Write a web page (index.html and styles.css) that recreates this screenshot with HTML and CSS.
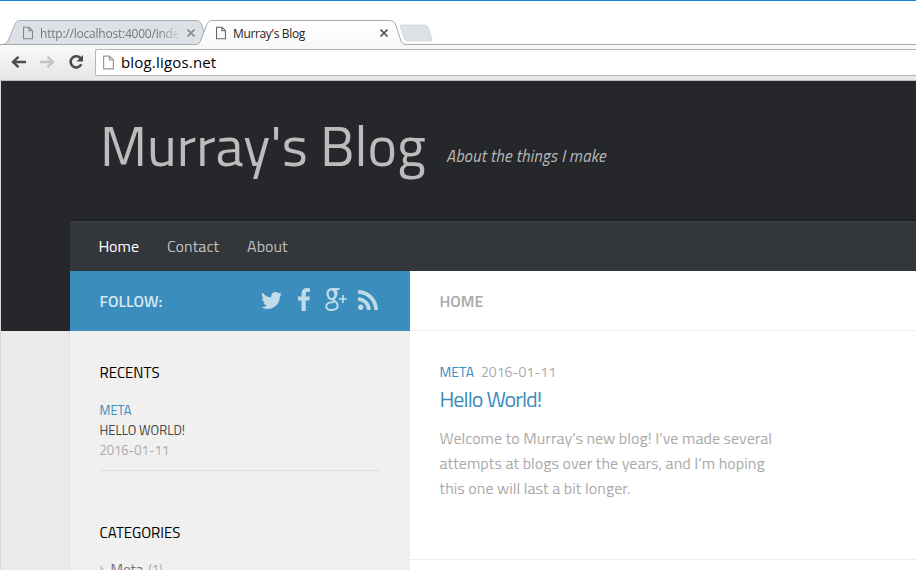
FILE: index.html
```html
<!DOCTYPE html>
<html lang="en">
<head>
<meta charset="utf-8">
<title>Murray's Blog</title>
<link rel="stylesheet" href="styles.css">
</head>
<body>
<div class="browser">
  <div class="tabstrip">
    <svg class="tab-shapes" width="916" height="34" viewBox="0 15 916 34">
      <defs>
        <linearGradient id="active" x1="0" y1="0" x2="0" y2="1"><stop offset="0" stop-color="#fff"/><stop offset="1" stop-color="#f7f7f7"/></linearGradient>
      </defs>
      <path d="M0 44.500H916V49H0z" fill="#f7f7f7"/>
      <path d="M0 44.500H3Q6.500 44.500 8 41L15 24Q16.500 20.500 20 20.500H196Q200 20.500 201.500 24L208 44.500z" fill="#dce1e8" stroke="#a9adb2"/>
      <path d="M400 26Q399.500 25 401.500 25H424Q427 25 428 27L432 39Q432.500 41 430 41H408Q405.500 41 404.500 39z" fill="#dce1e8" stroke="#cdd1d7" stroke-width=".7"/>
      <path d="M194 44.500H196Q199 44.500 200.500 41L207 24Q208.500 20.500 212 20.500H390Q394 20.500 395.500 24L401 41Q402.500 44.500 406 44.500H916V49H194z" fill="url(#active)"/>
      <path d="M0 44.500H196Q199 44.500 200.500 41L207 24Q208.500 20.500 212 20.500H390Q394 20.500 395.500 24L401 41Q402.500 44.500 406 44.500H916" fill="none" stroke="#a8a9aa"/>
    </svg>
    <div class="tab tab-back">
      <svg class="doc" viewBox="0 0 11 14"><path d="M.6.600H6.500L10.400 4.500V13.400H.6zM6.500.600V4.500H10.400"/></svg>
      <span class="tab-title url-title">http://localhost:4000/inde</span>
      <svg class="close" viewBox="0 0 8 8"><path d="M.5.500l7 7M7.500.500l-7 7"/></svg>
    </div>
    <div class="tab tab-front">
      <svg class="doc" viewBox="0 0 11 14"><path d="M.6.600H6.500L10.400 4.500V13.400H.6zM6.500.600V4.500H10.400"/></svg>
      <span class="tab-title">Murray's Blog</span>
      <svg class="close" viewBox="0 0 8 8"><path d="M.5.500l7 7M7.500.500l-7 7"/></svg>
    </div>
  </div>
  <div class="toolbar">
    <svg class="arrow" viewBox="0 0 15 12"><path d="M15 6H2M7.500.800L2 6l5.500 5.200"/></svg>
    <svg class="arrow arrow-off" viewBox="0 0 15 12"><path d="M0 6h13M7.500.800L13 6l-5.500 5.200"/></svg>
    <svg class="reload" viewBox="0 0 16 16"><path d="M12.800 4.600A5.600 5.600 0 1 0 13.300 10.300" fill="none" stroke="#4b4b4b" stroke-width="2.600"/><path d="M15 1v6.500H8.500z" fill="#4b4b4b"/></svg>
    <div class="address">
      <svg class="doc" viewBox="0 0 11 14"><path d="M.6.600H6.500L10.400 4.500V13.400H.6zM6.500.600V4.500H10.400"/></svg>
      <span class="address-text">blog.ligos.net</span>
    </div>
  </div>
</div>
<div class="page">
  <header class="masthead">
    <h1 class="site-title">Murray's Blog</h1>
    <p class="tagline">About the things I make</p>
  </header>
  <nav class="menu">
    <a class="item current">Home</a>
    <a class="item">Contact</a>
    <a class="item">About</a>
  </nav>
  <div class="columns">
    <aside class="sidebar">
      <div class="follow">
        <span class="follow-label">FOLLOW:</span>
        <div class="social">
          <svg class="twitter" viewBox="108 256 1576 1280"><path d="M1684 408q-67 98-162 167 1 14 1 42 0 130-38 259.500t-115.500 248.500-184.500 210.500-258 146-323 54.500q-271 0-496-145 35 4 78 4 225 0 401-138-105-2-188-64.500t-114-159.500q33 5 61 5 43 0 85-11-112-23-185.500-111.500t-73.500-205.500v-4q68 38 146 41-66-44-105-115t-39-154q0-88 44-163 121 149 294.500 238.500t371.500 99.500q-8-38-8-74 0-134 94.500-228.500t228.500-94.500q140 0 236 102 109-21 205-78-37 115-142 178 93-10 186-50z"/></svg>
          <svg class="facebook" viewBox="479 0 864 1664"><path d="M1343 12v264h-157q-86 0-116 36t-30 108v189h293l-39 296h-254v759h-306v-759h-255v-296h255v-218q0-186 104-288.500t277-102.500q147 0 228 12z"/></svg>
          <svg class="gplus" viewBox="0 0 22 23"><g fill="none" stroke="#c2dbe9"><ellipse cx="6.600" cy="6.300" rx="3.900" ry="5" stroke-width="2.300" transform="rotate(-14 6.600 6.300)"/><path d="M6 1H14.500M9.500 1.200Q12.300 3.500 11.500 6.500C11 9 8 9.500 8.200 11.300C8.400 13 12.700 13.800 12.700 17.500C12.700 20.400 10 22 6.500 22C3.500 22 1.200 20.700 1.200 18.200C1.200 15.300 4.300 14.100 9 14.100" stroke-width="1.900"/><path d="M18 7v8M14 11h8" stroke-width="1.700"/></g></svg>
          <svg class="rss" viewBox="192 128 1408 1408"><path d="M576 1344q0 80-56 136t-136 56-136-56-56-136 56-136 136-56 136 56 56 136zm512 123q2 28-17 48-18 21-47 21h-135q-25 0-43-16.500t-20-41.500q-22-229-184.500-391.500t-391.500-184.500q-25-2-41.500-20t-16.500-43v-135q0-29 21-47 17-17 43-17h5q160 13 306 80.500t259 181.500q114 113 181.500 259t80.500 306zm512 2q2 27-18 47-18 20-46 20h-143q-26 0-44.500-17.500t-19.500-42.500q-12-215-101-408.500t-231.500-336-336-231.500-408.500-102q-25-1-42.500-19.500t-17.500-43.500v-143q0-28 20-46 18-18 44-18h3q262 13 501.500 120t425.500 294q187 186 294 425.500t120 501.500z"/></svg>
        </div>
      </div>
      <div class="widgets">
        <section class="widget">
          <h3 class="widget-title">RECENTS</h3>
          <p class="recent-cat">META</p>
          <p class="recent-title">HELLO WORLD!</p>
          <p class="recent-date">2016-01-11</p>
        </section>
        <section class="widget categories">
          <h3 class="widget-title">CATEGORIES</h3>
          <div class="category"><svg class="caret" viewBox="0 0 4 8"><path d="M0 0l4 4-4 4z"/></svg><span class="cat-name">Meta</span><span class="cat-count">(1)</span></div>
        </section>
      </div>
    </aside>
    <main class="content">
      <div class="page-title">HOME</div>
      <article class="post">
        <div class="post-meta"><span class="post-cat">META</span><span class="post-date">2016-01-11</span></div>
        <h2 class="post-title">Hello World!</h2>
        <p class="excerpt">Welcome to Murray’s new blog! I’ve made several<br>attempts at blogs over the years, and I’m hoping<br>this one will last a bit longer.</p>
      </article>
    </main>
  </div>
</div>
</body>
</html>
```

FILE: styles.css
```css
* { box-sizing: border-box; }
body { margin: 0; width: 916px; height: 570px; overflow: hidden; background: #fff; font-family: "Titillium Web", Roboto, sans-serif; }
h1, h2, h3, p { margin: 0; font-weight: 400; white-space: nowrap; }
svg { display: block; flex: none; }

.browser { height: 81px; border-top: 1px solid #1a7fd4; font-family: "Segoe UI", "Open Sans", sans-serif; }
.tabstrip { position: relative; height: 48px; padding-top: 20px; display: flex; }
.tab-shapes { position: absolute; left: 0; top: 14px; }
.tab { position: relative; display: flex; align-items: center; height: 24px; font-size: 12px; white-space: nowrap; }
.tab-back { width: 194px; padding-left: 23px; color: #777; }
.tab-front { width: 200px; padding-left: 22px; color: #222; }
.doc { width: 10px; height: 14px; fill: none; stroke: #666; stroke-width: 1.2; }
.tab-back .doc { stroke: #858585; }
.tab-title { margin-left: 7px; width: 140px; letter-spacing: -.36px; }
.url-title { letter-spacing: -.22px; -webkit-mask-image: linear-gradient(90deg, #000 118px, transparent 142px); mask-image: linear-gradient(90deg, #000 118px, transparent 142px); }
.close { width: 8px; height: 8px; margin-left: 7px; fill: none; stroke: #888; stroke-width: 1.6; }
.tab-back .close { margin-left: 8px; }
.tab-front .close { stroke: #555; margin-left: 6px; }
.tab-front .tab-title { width: 141px; }
.toolbar { height: 32px; display: flex; align-items: center; padding: 0 0 5px 11px; background: linear-gradient(#f7f7f7, #e6e6e6); border-bottom: 1px solid #bdbdbd; }
.arrow { width: 15px; height: 12px; margin-right: 14px; fill: none; stroke: #4b4b4b; stroke-width: 2.4; }
.arrow-off { stroke: #c4c4c4; }
.reload { width: 16px; height: 16px; margin-left: -1px; }
.address { align-self: flex-start; height: 27px; flex: 1; margin-left: 11px; display: flex; align-items: center; padding-left: 7px; background: #fff; border: 1px solid #b5b5b5; border-right: 0; border-radius: 2px 0 0 2px; }
.address .doc { width: 11px; height: 15px; stroke: #999; }
.address-text { margin-left: 7px; margin-top: -2px; font-size: 15px; color: #000; letter-spacing: .18px; }

.page { height: 489px; padding-left: 69px; border-left: 1px solid #d9d9d9; background: linear-gradient(#26272b 250px, #eaeaea 250px); }
.masthead { height: 139px; display: flex; padding-left: 30px; }
.site-title { width: 346px; font-size: 56px; line-height: 64px; padding-top: 33px; color: #bcbcbd; }
.tagline { padding-top: 63px; font-size: 16.5px; line-height: 24px; font-style: italic; letter-spacing: .25px; color: #b8b8b9; }
.menu { height: 51px; padding-left: 28.4px; display: flex; gap: 28px; align-items: center; background: #33363b; border-top: 1px solid #1c1d20; box-shadow: inset 0 1px #3e4146; }
.item { color: #bfc0c1; font-size: 16px; line-height: 24px; white-space: nowrap; }
.item + .item { letter-spacing: .04px; }
.current { color: #fff; font-weight: 500; }
.columns { height: 299px; display: flex; }
.sidebar { width: 340px; background: #f0f0f0; }
.follow { height: 60px; padding: 0 32px 0 29.5px; display: flex; justify-content: space-between; align-items: center; background: #3b8dbd; }
.follow-label { color: #d3e6f1; font-size: 16px; font-weight: 600; }
.social { display: flex; align-items: center; fill: #c2dbe9; height: 24px; margin-top: -3px; }
.twitter { width: 21px; height: 17px; margin-right: 16px; margin-top: 2px; }
.facebook { width: 12px; height: 23px; margin-right: 15px; }
.gplus { width: 22px; height: 23px; margin-right: 11px; }
.rss { width: 20px; height: 20px; }
.widgets { height: 239px; box-shadow: -1px 0 #e2e2e2; }
.widget { padding: 30px 30px 0 29.5px; }
.widget-title { font-size: 15px; line-height: 24px; color: #000; margin-bottom: 15px; }
.recent-cat, .recent-title, .recent-date { font-size: 13px; line-height: 20px; }
.recent-cat { color: #3b8dbd; }
.recent-title { color: #444; }
.recent-date { color: #aaa; height: 31px; border-bottom: 1px solid #ddd; }
.widget.categories { padding-top: 50px; }
.category { display: flex; align-items: center; height: 24px; margin-top: -3px; font-size: 15px; color: #777; }
.caret { width: 4px; height: 8px; fill: #ccc; margin-right: 7px; }
.cat-count { margin-left: 5px; font-size: 13px; color: #aaa; }
.content { flex: 1; background: #fff; }
.page-title { height: 60px; padding-left: 29.5px; display: flex; align-items: center; border-bottom: 1px solid #eee; color: #aaa; font-size: 16px; font-weight: 600; }
.post { height: 229px; padding: 31px 0 0 29.5px; border-bottom: 1px solid #eee; }
.post-meta { display: flex; font-size: 14px; line-height: 20px; color: #aaa; }
.post-cat { width: 41.5px; color: #3b8dbd; }
.post-title { font-size: 22px; line-height: 30px; margin-top: 2px; color: #3b8dbd; letter-spacing: -.93px; }
.excerpt { margin-top: 12px; font-size: 16px; line-height: 25px; letter-spacing: .03px; color: #aaa; }
```
